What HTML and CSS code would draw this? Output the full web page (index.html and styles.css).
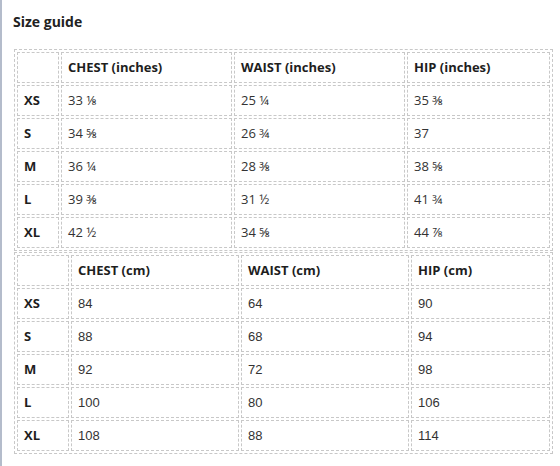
FILE: index.html
```html
<!DOCTYPE html>
<html>
<head>
<meta charset="utf-8">
<link rel="stylesheet" href="styles.css">
</head>
<body>
<div class="panel">
  <h2 class="title">Size guide</h2>
  <table class="sizes inches">
    <colgroup>
      <col class="c-size"><col class="c-a"><col class="c-b"><col class="c-c">
    </colgroup>
    <tr><th></th><th>CHEST (inches)</th><th>WAIST (inches)</th><th>HIP (inches)</th></tr>
    <tr><th>XS</th><td>33 ⅛</td><td>25 ¼</td><td>35 ⅜</td></tr>
    <tr><th>S</th><td>34 ⅝</td><td>26 ¾</td><td>37</td></tr>
    <tr><th>M</th><td>36 ¼</td><td>28 ⅜</td><td>38 ⅝</td></tr>
    <tr><th>L</th><td>39 ⅜</td><td>31 ½</td><td>41 ¾</td></tr>
    <tr><th>XL</th><td>42 ½</td><td>34 ⅝</td><td>44 ⅞</td></tr>
  </table>
  <table class="sizes cm">
    <colgroup>
      <col class="c-size"><col class="c-a"><col class="c-b"><col class="c-c">
    </colgroup>
    <tr><th></th><th>CHEST (cm)</th><th>WAIST (cm)</th><th>HIP (cm)</th></tr>
    <tr><th>XS</th><td>84</td><td>64</td><td>90</td></tr>
    <tr><th>S</th><td>88</td><td>68</td><td>94</td></tr>
    <tr><th>M</th><td>92</td><td>72</td><td>98</td></tr>
    <tr><th>L</th><td>100</td><td>80</td><td>106</td></tr>
    <tr><th>XL</th><td>108</td><td>88</td><td>114</td></tr>
  </table>
</div>
</body>
</html>
```

FILE: styles.css
```css
html, body {
  margin: 0;
  padding: 0;
  background: #fff;
}
body {
  font-family: "Open Sans", "Noto Sans", "DejaVu Sans", sans-serif;
  color: #222;
}
.panel {
  border-left: 2px solid #b4bccb;
  min-height: 466px;
  box-sizing: border-box;
  padding: 12px 7px 0 12px;
}
.title {
  margin: 0 0 17px -1px;
  font-size: 14px;
  font-weight: 700;
  line-height: 20px;
  color: #222;
}
.sizes {
  width: 100%;
  table-layout: fixed;
  border: 1px dashed #c8c8c8;
  border-spacing: 2px;
  margin: 0 0 1px 0;
  font-size: 13px;
}
.sizes th,
.sizes td {
  border: 1px dashed #c8c8c8;
  padding: 6px 6px;
  line-height: 17px;
  text-align: left;
  vertical-align: middle;
  white-space: nowrap;
}
.sizes th {
  font-weight: 700;
  color: #1e1e1e;
}
.sizes td {
  color: #333;
}
.inches .c-size { width: 42px; }
.inches .c-a { width: 171px; }
.inches .c-b { width: 171px; }
.inches .c-c { width: auto; }
.cm .c-size { width: 52px; }
.cm .c-a { width: 168px; }
.cm .c-b { width: 168px; }
.cm .c-c { width: auto; }
.cm td {
  font-family: "Liberation Sans", Arial, sans-serif;
  color: #333;
}
```
